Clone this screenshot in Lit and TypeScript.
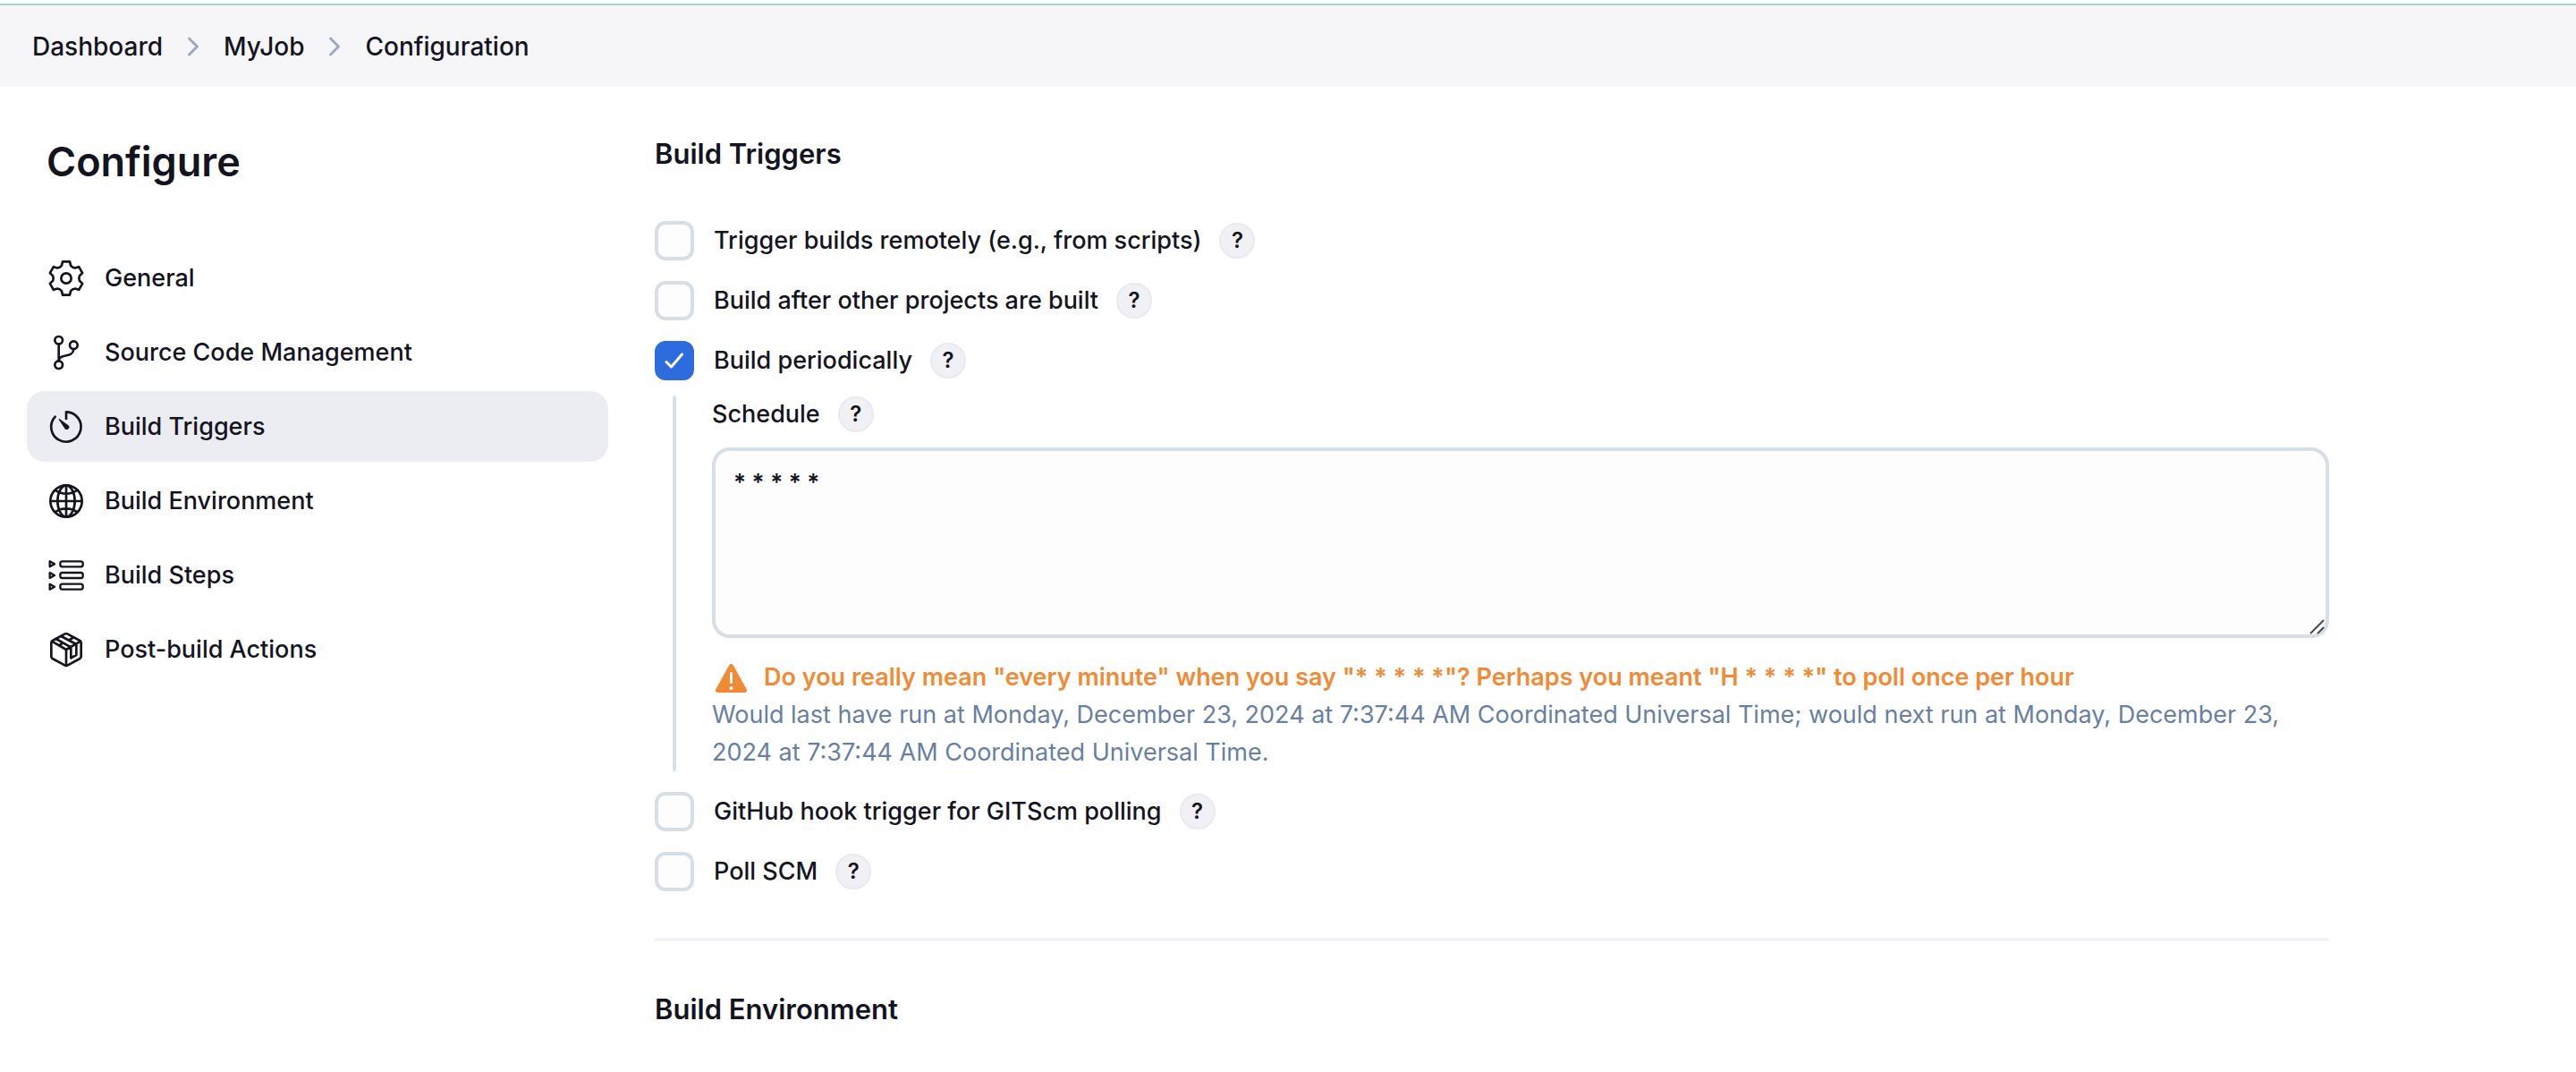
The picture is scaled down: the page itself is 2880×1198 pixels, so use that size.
import { LitElement, html, css, svg } from "lit";
import { customElement } from "lit/decorators.js";

interface NavItem {
  label: string;
  icon: unknown;
  active?: boolean;
}

const icon = (content: unknown, stroke = 8) => html`<svg
  class="nav-icon"
  viewBox="-66 -66 132 132"
  fill="none"
  stroke="currentColor"
  stroke-width=${stroke}
  stroke-linecap="round"
  stroke-linejoin="round"
  aria-hidden="true"
>
  ${content}
</svg>`;

const gear = icon(svg`
  <path d="M-15-43L-12-56H12L15-43Q20.500-35.500 29.700-34.500L42.500-38.400L54.500-17.600L44.700-8.500Q41 0 44.700 8.500L54.500 17.600L42.500 38.400L29.700 34.500Q20.500 35.500 15 43L12 56H-12L-15 43Q-20.500 35.500-29.700 34.500L-42.500 38.400L-54.500 17.600L-44.700 8.500Q-41 0-44.700-8.500L-54.500-17.600L-42.500-38.400L-29.700-34.500Q-20.500-35.500-15-43Z"/>
  <circle r="17"/>`);

const branch = icon(svg`
  <circle cx="-25" cy="-41" r="13"/><circle cx="-25" cy="41" r="13"/><circle cx="25" cy="-25" r="13"/>
  <path d="M-25-28V28M25-12C24 4 14 7 4 9C-10 12-25 14-25 28"/>`);

const timer = icon(svg`
  <path d="M-37-34A50 50 0 1 0 0-50V-27"/>
  <path d="M-23-25L6-4A6 6 0 1 1-3 5Z" fill="currentColor" stroke-width="4"/>`);

const globe = icon(svg`
  <circle r="53"/>
  <path d="M0-53C-15-53-29-29-29 0S-15 53 0 53S29 29 29 0S15-53 0-53ZM-36-36C-26-29-13-25 0-25S26-29 36-36M36 36C26 29 13 25 0 25S-26 29-36 36M0-53V53M-53 0H53"/>`);

const steps = icon(svg`
  <path d="M-55-47V-29L-39-38ZM-55-9V9L-39 0ZM-55 29V47L-39 38Z"/>
  <rect x="-20" y="-47" width="76" height="18" rx="7"/>
  <rect x="-20" y="-9" width="76" height="18" rx="7"/>
  <rect x="-20" y="29" width="76" height="18" rx="7"/>`, 7);

const box = icon(svg`
  <path d="M-4-53Q0-55 4-53L46-30Q50-27 50-23V23Q50 27 46 30L4 53Q0 55-4 53L-46 30Q-50 27-50 23V-23Q-50-27-46-30Z"/>
  <path d="M-48-28L0 0L48-28M0 0V54M-17-45L34-18V18L16 28V-8L-34-36M-25-14L-11-22M11-33L25-41"/>`);

const navItems: NavItem[] = [
  { label: "General", icon: gear },
  { label: "Source Code Management", icon: branch },
  { label: "Build Triggers", icon: timer, active: true },
  { label: "Build Environment", icon: globe },
  { label: "Build Steps", icon: steps },
  { label: "Post-build Actions", icon: box },
];

const chevron = html`<svg class="chevron" viewBox="0 0 14 24" fill="none" stroke="currentColor" stroke-width="3" stroke-linecap="round" stroke-linejoin="round" aria-hidden="true">
  <path d="M2.500 3l9 9l-9 9"/>
</svg>`;

@customElement("app-root")
export class AppRoot extends LitElement {
  static styles = css`
    :host {
      display: block;
      font-family: Inter, "Liberation Sans", sans-serif;
      font-size: 27px;
      line-height: 42px;
      font-weight: 500;
      color: #14141f;
      background: #fff;
    }
    * { box-sizing: border-box; }
    .topline { height: 6px; background: #f8feff; border-bottom: 2px solid #afccd2; }
    .breadcrumbs {
      display: flex;
      align-items: center;
      gap: 27px;
      height: 91px;
      padding: 0 36px;
      font-size: 28px;
      background: #f6f6f9;
    }
    .breadcrumbs a, .nav-link { color: inherit; text-decoration: none; }
    .chevron { width: 14px; height: 24px; color: #9ba9c6; }
    .layout {
      display: grid;
      grid-template-columns: 650px minmax(0, 1872px);
      gap: 52px;
      padding: 54px 30px 36px;
    }
    h1 { margin: 0; padding: 0 22px; font-size: 45px; line-height: 60px; font-weight: 600; }
    nav { display: flex; flex-direction: column; gap: 4px; margin-top: 60px; }
    .nav-link {
      display: flex;
      align-items: center;
      gap: 21px;
      height: 79px;
      padding: 0 22px;
      border-radius: 20px;
    }
    .nav-link.active { background: #ecedf3; }
    .nav-icon { width: 44px; height: 44px; }
    h2 { margin: 0; font-size: 31px; line-height: 42px; font-weight: 600; }
    .triggers { display: flex; flex-direction: column; gap: 23px; margin-top: 54px; }
    .row { display: flex; align-items: center; height: 44px; gap: 20px; }
    .row label { display: flex; align-items: center; gap: 22px; }
    .check {
      appearance: none;
      width: 44px;
      height: 44px;
      margin: 0;
      border: 4px solid #d7dfe6;
      border-radius: 12px;
      background: #fdfdfe;
    }
    .check-wrap { display: grid; width: 44px; height: 44px; }
    .check-wrap > * { grid-area: 1 / 1; }
    .check:checked { background: #2d6cdf; border-color: #2d6cdf; }
    .tick { width: 44px; height: 44px; color: #fff; pointer-events: none; visibility: hidden; }
    .check:checked + .tick { visibility: visible; }
    .help {
      width: 40px;
      height: 40px;
      padding: 0;
      border: 2px solid #e9eaf1;
      border-radius: 50%;
      background: #f0f0f5;
      color: inherit;
      font: 600 24px/36px Inter, "Liberation Sans", sans-serif;
      text-align: center;
    }
    .nested {
      display: grid;
      grid-template-columns: 4px minmax(0, 1fr);
      gap: 40px;
      margin: -6px 0 0 20px;
    }
    .rail { background: #d7dfe6; border-radius: 2px; }
    .schedule { display: flex; align-items: center; gap: 20px; height: 42px; }
    .editor { position: relative; margin: 16px 0 23px; }
    textarea {
      display: block;
      width: 100%;
      height: 213px;
      margin: 0;
      padding: 14px 20px;
      border: 4px solid #d7dfe6;
      border-radius: 20px;
      background: #fdfdfe;
      color: inherit;
      font: 600 26px/42px Inter, "Liberation Sans", sans-serif;
      resize: vertical;
    }
    textarea::-webkit-resizer { background: transparent; }
    .grip {
      position: absolute;
      right: 4px;
      bottom: 4px;
      width: 18px;
      height: 18px;
      color: #4a4a4f;
      pointer-events: none;
    }
    .warning { display: flex; align-items: center; gap: 16px; font-weight: 600; color: #f08a35; }
    .warning svg { flex: none; width: 42px; height: 42px; }
    .info { margin: 0; font-weight: 400; color: #677fa3; }
    hr { margin: 52px 0 55px; border: 0; height: 4px; background: #f2f2f8; }
  `;

  private help(topic: string) {
    return html`<button class="help" type="button" aria-label="Help for feature: ${topic}">?</button>`;
  }

  private trigger(id: string, label: string, checked = false) {
    return html`<div class="row">
      <label for=${id}>
        <span class="check-wrap">
          <input class="check" type="checkbox" id=${id} ?checked=${checked} />
          <svg class="tick" viewBox="0 0 44 44" fill="none" stroke="currentColor" stroke-width="3" stroke-linecap="round" stroke-linejoin="round" aria-hidden="true"><path d="M13 23.500L18.500 29L30.500 15"/></svg>
        </span>
        ${label}
      </label>
      ${this.help(label)}
    </div>`;
  }

  render() {
    return html`
      <div class="topline"></div>
      <header class="breadcrumbs">
        <a href="#dashboard">Dashboard</a>${chevron}<a href="#myjob">MyJob</a>${chevron}<a href="#configuration">Configuration</a>
      </header>
      <div class="layout">
        <aside>
          <h1>Configure</h1>
          <nav>
            ${navItems.map((item) => html`<a class="nav-link ${item.active ? "active" : ""}" href="#section">${item.icon}<span>${item.label}</span></a>`)}
          </nav>
        </aside>
        <main>
          <h2>Build Triggers</h2>
          <div class="triggers">
            ${this.trigger("remote", "Trigger builds remotely (e.g., from scripts)")}
            ${this.trigger("after", "Build after other projects are built")}
            ${this.trigger("periodic", "Build periodically", true)}
            <div class="nested">
              <div class="rail"></div>
              <div>
                <div class="schedule"><label for="schedule">Schedule</label>${this.help("Schedule")}</div>
                <div class="editor">
                  <textarea id="schedule" spellcheck="false" .value=${"* * * * *"}></textarea>
                  <svg class="grip" viewBox="0 0 18 18" fill="none" stroke="currentColor" stroke-width="2" aria-hidden="true"><path d="M1 17L16 2M9 17L16 10"/></svg>
                </div>
                <div class="warning">
                  <svg viewBox="0 0 42 42" aria-hidden="true">
                    <path d="M21.500 8.500L36.500 35.500H6.500z" fill="currentColor" stroke="currentColor" stroke-width="5" stroke-linejoin="round"/>
                    <path d="M21.500 16.500v10" stroke="#fff" stroke-width="3" stroke-linecap="round"/><circle cx="21.500" cy="33" r="2" fill="#fff"/>
                  </svg>
                  <span>Do you really mean "every minute" when you say "* * * * *"? Perhaps you meant "H * * * *" to poll once per hour</span>
                </div>
                <p class="info">Would last have run at Monday, December 23, 2024 at 7:37:44 AM Coordinated Universal Time; would next run at Monday, December 23, 2024 at 7:37:44 AM Coordinated Universal Time.</p>
              </div>
            </div>
            ${this.trigger("github", "GitHub hook trigger for GITScm polling")}
            ${this.trigger("poll", "Poll SCM")}
          </div>
          <hr />
          <h2>Build Environment</h2>
        </main>
      </div>
    `;
  }
}
